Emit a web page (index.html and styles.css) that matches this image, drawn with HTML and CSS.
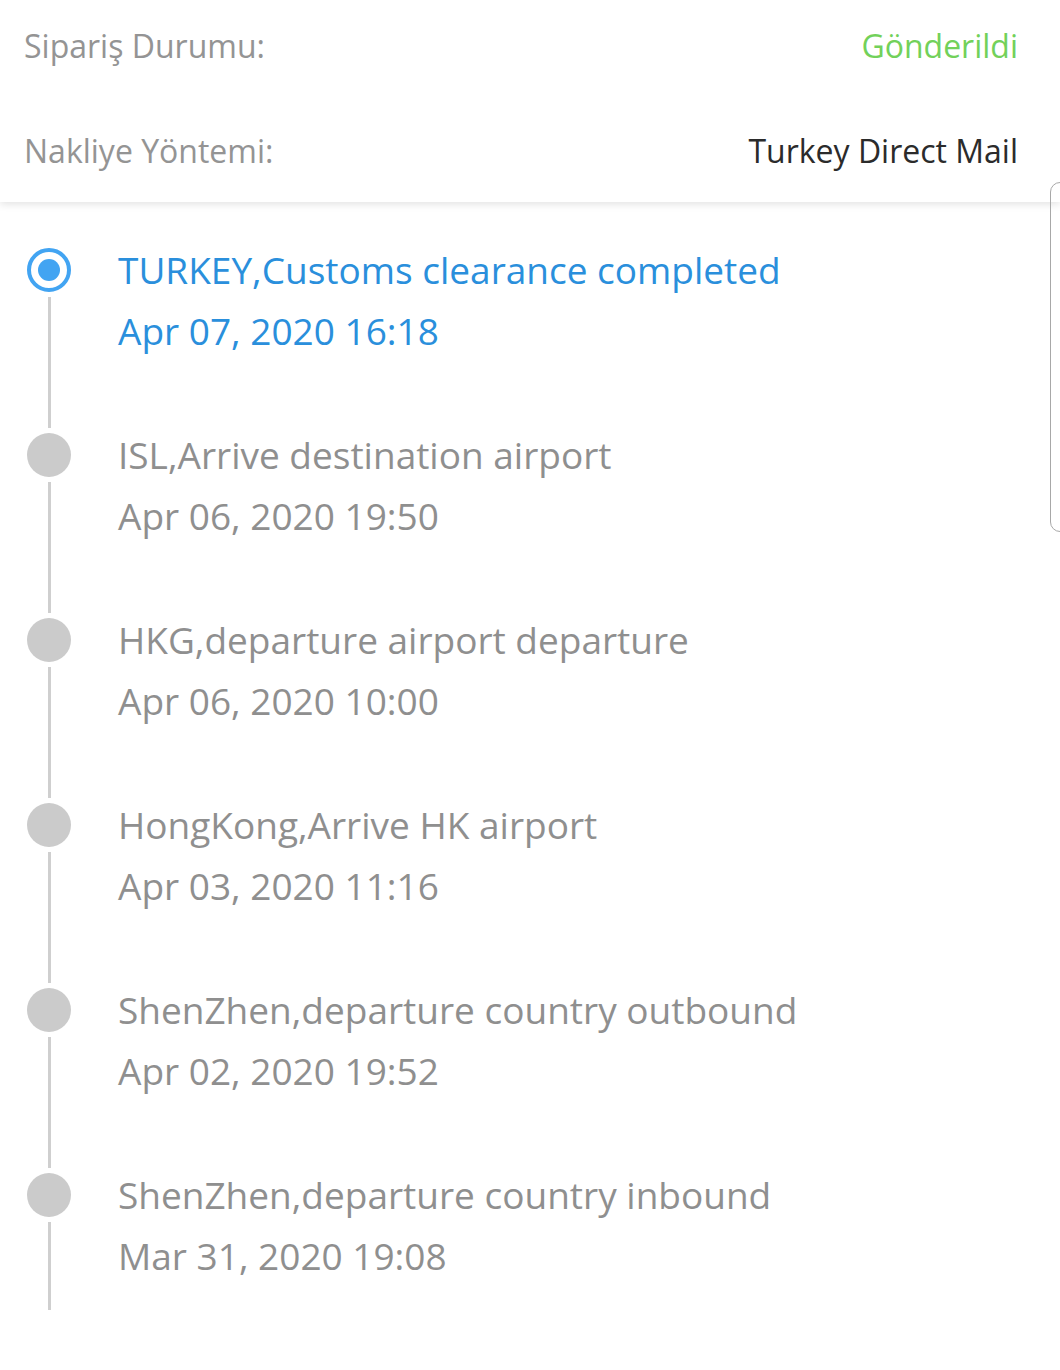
FILE: index.html
```html
<!DOCTYPE html>
<html>
<head>
<meta charset="utf-8">
<link rel="stylesheet" href="styles.css">
</head>
<body>
<div class="header">
  <div class="row"><span class="label">Sipariş Durumu:</span><span class="value green">Gönderildi</span></div>
  <div class="row"><span class="label">Nakliye Yöntemi:</span><span class="value dark">Turkey Direct Mail</span></div>
</div>
<div class="timeline">
  <div class="item active">
    <div class="rail"><div class="dot"><div class="inner"></div></div><div class="line"></div></div>
    <div class="text"><div>TURKEY,Customs clearance completed</div><div>Apr 07, 2020 16:18</div></div>
  </div>
  <div class="item">
    <div class="rail"><div class="dot"></div><div class="line"></div></div>
    <div class="text"><div>ISL,Arrive destination airport</div><div>Apr 06, 2020 19:50</div></div>
  </div>
  <div class="item">
    <div class="rail"><div class="dot"></div><div class="line"></div></div>
    <div class="text"><div>HKG,departure airport departure</div><div>Apr 06, 2020 10:00</div></div>
  </div>
  <div class="item">
    <div class="rail"><div class="dot"></div><div class="line"></div></div>
    <div class="text"><div>HongKong,Arrive HK airport</div><div>Apr 03, 2020 11:16</div></div>
  </div>
  <div class="item">
    <div class="rail"><div class="dot"></div><div class="line"></div></div>
    <div class="text"><div>ShenZhen,departure country outbound</div><div>Apr 02, 2020 19:52</div></div>
  </div>
  <div class="item last">
    <div class="rail"><div class="dot"></div><div class="line"></div></div>
    <div class="text"><div>ShenZhen,departure country inbound</div><div>Mar 31, 2020 19:08</div></div>
  </div>
</div>
<div class="edge"></div>
</body>
</html>
```

FILE: styles.css
```css
html, body {
  margin: 0;
  padding: 0;
  background: #fff;
  font-family: "Open Sans", "Noto Sans", sans-serif;
  overflow: hidden;
}
.header {
  height: 202px;
  box-sizing: border-box;
  padding: 0 42px 0 24px;
  background: #fff;
  box-shadow: 0 2px 8px rgba(0,0,0,0.12);
  position: relative;
  z-index: 1;
}
.row {
  display: flex;
  justify-content: space-between;
  align-items: center;
  height: 90px;
  font-size: 32px;
}
.row + .row {
  margin-top: 15px;
}
.label { color: #949494; }
.green { color: #72d15a; }
.dark { color: #2b2b2b; }
.timeline {
  padding: 38px 0 0 27px;
}
.item {
  display: flex;
  height: 185px;
}
.rail {
  width: 44px;
  display: flex;
  flex-direction: column;
  align-items: center;
  flex-shrink: 0;
}
.dot {
  width: 44px;
  height: 44px;
  border-radius: 50%;
  background: #cbcbcb;
  margin-top: 8px;
  box-sizing: border-box;
  display: flex;
  align-items: center;
  justify-content: center;
}
.active .dot {
  background: #fff;
  border: 4px solid #42a4f2;
}
.inner {
  width: 22px;
  height: 22px;
  border-radius: 50%;
  background: #42a4f2;
}
.line {
  width: 3px;
  flex: 1;
  background: #cfcfcf;
  margin: 5px 0 -3px;
}
.last .line {
  margin-bottom: 40px;
}
.text {
  margin-left: 47px;
  font-size: 37px;
  line-height: 61px;
  margin-top: -1px;
  color: #8f8f8f;
}
.active .text {
  color: #2a8fdc;
}
.edge {
  position: absolute;
  left: 1050px;
  top: 182px;
  width: 20px;
  height: 350px;
  border: 1px solid #a8a8a8;
  border-radius: 12px;
  box-sizing: border-box;
  z-index: 2;
}
```
